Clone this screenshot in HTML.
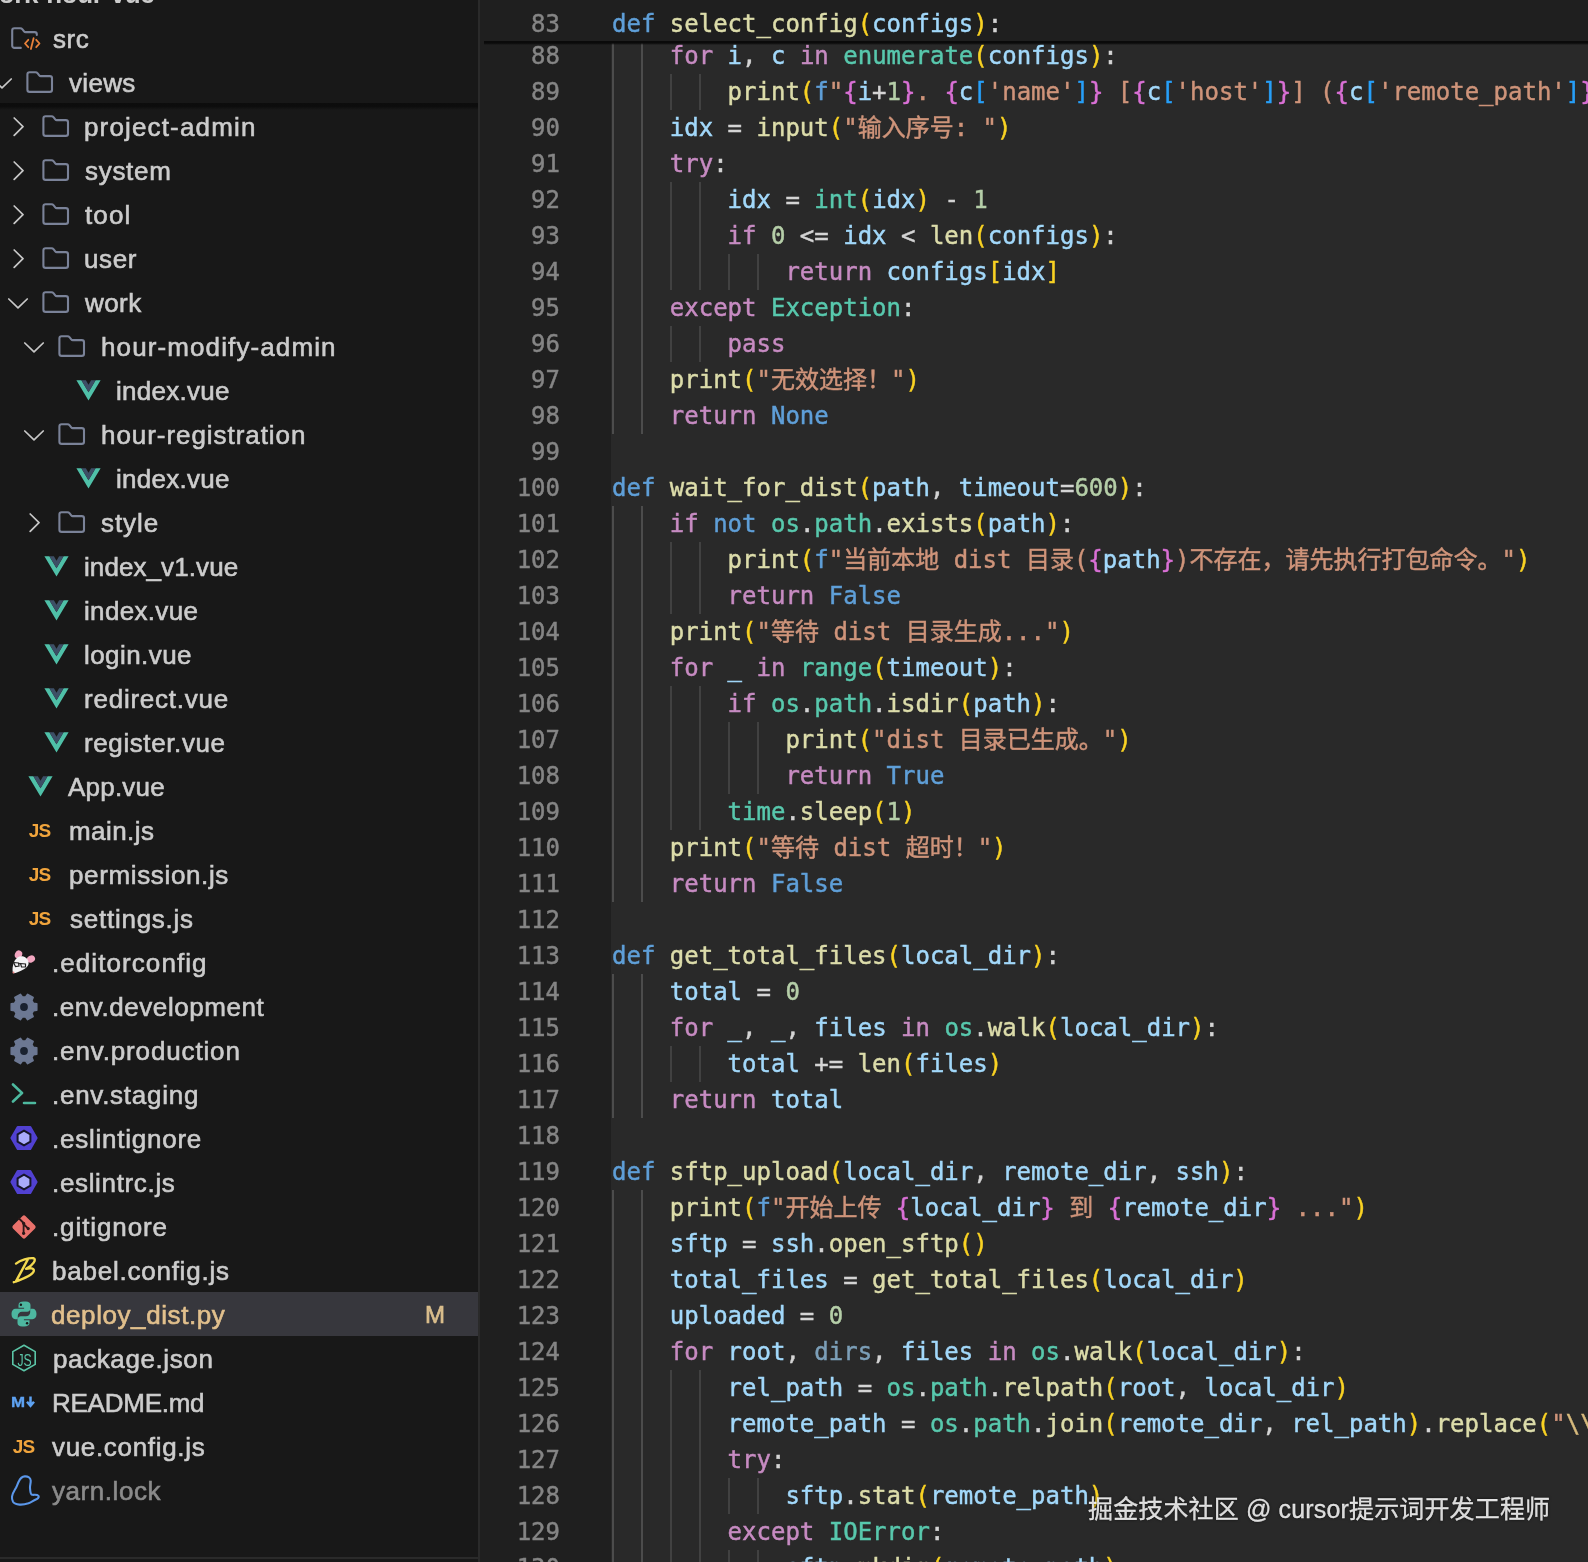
<!DOCTYPE html>
<html lang="zh"><head><meta charset="utf-8"><title>deploy_dist.py</title>
<style>
*{margin:0;padding:0;box-sizing:border-box}
html,body{width:1588px;height:1562px;overflow:hidden;background:#181818}
body{position:relative;font-family:"Liberation Sans","Noto Sans CJK SC",sans-serif}
#side{position:absolute;left:0;top:0;width:478px;height:1562px;background:#181818;overflow:hidden}
#sb{position:absolute;left:478px;top:0;width:2px;height:1562px;background:#2a2a2a}
.row{position:absolute;left:0;width:478px;height:44px;color:#cccccc;font-size:26px;line-height:44px;white-space:nowrap}
.row.sel{background:#37373d;color:#e2c08d}
.row.dim{color:#8b8b8b}
.lbl,.tx,.no,.badge,#wm,#hdr,.jsic,.mdic,.iw{will-change:transform}
.iw{position:absolute;display:block;line-height:0}
.ic{display:block;overflow:visible}
.lbl{position:absolute;top:1px;height:44px;line-height:44px;-webkit-text-stroke:0.6px}
.badge{position:absolute;left:425px;top:1px;font-size:24px;line-height:44px;color:#d9bd8c;-webkit-text-stroke:0.7px}
.jsic{display:block;font-weight:bold;color:#f0a43c;line-height:18px;letter-spacing:-0.9px;text-align:center;width:24px;height:18px;text-indent:-1px}
.mdic{display:block;font-weight:bold;color:#5ea2f2;font-size:15px;-webkit-text-stroke:0.3px;line-height:14px;width:26px;height:14px;white-space:nowrap;letter-spacing:0}
#hdr{position:absolute;left:-21px;top:-28.5px;font-size:26px;font-weight:bold;color:#cccccc;line-height:44px;white-space:nowrap;letter-spacing:-0.4px}
#sshadow{position:absolute;left:0;top:103px;width:478px;height:7px;background:linear-gradient(#0d0d0d,#0c0c0c 45%,#181818)}
#sbot{position:absolute;left:0;top:1557px;width:478px;height:2px;background:#2a2a2a}
#ed{position:absolute;left:480px;top:0;width:1108px;height:1562px;background:#1f1f1f;overflow:hidden}
#codebg{position:absolute;left:131px;top:41px;right:0;bottom:0;background:#292929}
.ln{position:absolute;left:0;width:1108px;height:36px;line-height:36px;font-family:"DejaVu Sans Mono","Liberation Mono","Noto Sans CJK SC",monospace;font-size:24px;white-space:pre;color:#d4d4d4;-webkit-text-stroke:0.45px}
.no{position:absolute;left:0;top:0;width:80px;text-align:right;color:#858585}
.tx{position:absolute;left:132px;top:0}
.g{position:absolute;top:0;width:2px;height:36px;background:#414141}
.g0{background:#4c4c4c}
.k{color:#5f9fd8}.c{color:#c78bc2}.f{color:#dcdcaa}.v{color:#a2d8fa}.t{color:#58c8ad}.s{color:#cf947a}.n{color:#b5cea8}
.b1{color:#f9d223}.b2{color:#da70d6}.b3{color:#279ff8}.d{color:#7c9fb8}.e{color:#d7ba7d}
#sticky{position:absolute;left:0;top:0;width:1108px;height:41px;background:#1f1f1f}
#sticky .ln{top:6px !important}
#stsh{position:absolute;left:4px;top:41px;width:1104px;height:4px;background:linear-gradient(#0a0a0a,#0a0a0a 50%,rgba(10,10,10,0))}
#wm{position:absolute;left:1088px;top:1490px;font-size:25px;letter-spacing:0.15px;-webkit-text-stroke:0.3px;line-height:38px;color:rgba(255,255,255,.84);white-space:nowrap;text-shadow:0 0 3px rgba(0,0,0,.7);font-family:"Liberation Sans","Noto Sans CJK SC",sans-serif}
</style></head>
<body>
<div id="side">
<div id="hdr">work-hour-vue</div>
<div class="row" style="top:104px"><span class="iw" style="left:42.0px;top:10.0px;width:28px;height:24px"><svg class="ic" width="28" height="24" viewBox="0 0 28 24" ><path d="M3.600 2.300h5.800c.9 0 1.700.4 2.300 1.100l1.500 1.900c.4.500 1 .8 1.600.8H23.800c1.300 0 2.200 1 2.200 2.200V19.700c0 1.300-1 2.200-2.200 2.200H3.600C2.400 21.900 1.400 20.900 1.400 19.700V4.500C1.400 3.300 2.400 2.300 3.600 2.300z" fill="none" stroke="#7a8298" stroke-width="2.100" stroke-linejoin="round"/></svg></span><span class="iw" style="left:12.5px;top:13px"><svg class="ic" width="12" height="20" viewBox="0 0 12 20" ><path d="M1.200 1l8.800 8.700-8.800 8.700" fill="none" stroke="#c8c8c8" stroke-width="1.700" stroke-linecap="round" stroke-linejoin="round"/></svg></span><span class="lbl" style="left:83.60px;letter-spacing:1.154px">project-admin</span></div>
<div class="row" style="top:148px"><span class="iw" style="left:42.0px;top:10.0px;width:28px;height:24px"><svg class="ic" width="28" height="24" viewBox="0 0 28 24" ><path d="M3.600 2.300h5.800c.9 0 1.700.4 2.300 1.100l1.500 1.900c.4.500 1 .8 1.600.8H23.800c1.300 0 2.200 1 2.200 2.200V19.700c0 1.300-1 2.200-2.200 2.200H3.600C2.400 21.900 1.400 20.900 1.400 19.700V4.500C1.400 3.300 2.400 2.300 3.600 2.300z" fill="none" stroke="#7a8298" stroke-width="2.100" stroke-linejoin="round"/></svg></span><span class="iw" style="left:12.5px;top:13px"><svg class="ic" width="12" height="20" viewBox="0 0 12 20" ><path d="M1.200 1l8.800 8.700-8.800 8.700" fill="none" stroke="#c8c8c8" stroke-width="1.700" stroke-linecap="round" stroke-linejoin="round"/></svg></span><span class="lbl" style="left:84.60px;letter-spacing:0.707px">system</span></div>
<div class="row" style="top:192px"><span class="iw" style="left:42.0px;top:10.0px;width:28px;height:24px"><svg class="ic" width="28" height="24" viewBox="0 0 28 24" ><path d="M3.600 2.300h5.800c.9 0 1.700.4 2.300 1.100l1.500 1.900c.4.500 1 .8 1.600.8H23.800c1.300 0 2.200 1 2.200 2.200V19.700c0 1.300-1 2.200-2.200 2.200H3.600C2.400 21.900 1.400 20.900 1.400 19.700V4.500C1.400 3.300 2.400 2.300 3.600 2.300z" fill="none" stroke="#7a8298" stroke-width="2.100" stroke-linejoin="round"/></svg></span><span class="iw" style="left:12.5px;top:13px"><svg class="ic" width="12" height="20" viewBox="0 0 12 20" ><path d="M1.200 1l8.800 8.700-8.800 8.700" fill="none" stroke="#c8c8c8" stroke-width="1.700" stroke-linecap="round" stroke-linejoin="round"/></svg></span><span class="lbl" style="left:84.60px;letter-spacing:1.133px">tool</span></div>
<div class="row" style="top:236px"><span class="iw" style="left:42.0px;top:10.0px;width:28px;height:24px"><svg class="ic" width="28" height="24" viewBox="0 0 28 24" ><path d="M3.600 2.300h5.800c.9 0 1.700.4 2.300 1.100l1.500 1.900c.4.500 1 .8 1.600.8H23.800c1.300 0 2.200 1 2.200 2.200V19.700c0 1.300-1 2.200-2.200 2.200H3.600C2.400 21.900 1.400 20.900 1.400 19.700V4.500C1.400 3.300 2.400 2.300 3.600 2.300z" fill="none" stroke="#7a8298" stroke-width="2.100" stroke-linejoin="round"/></svg></span><span class="iw" style="left:12.5px;top:13px"><svg class="ic" width="12" height="20" viewBox="0 0 12 20" ><path d="M1.200 1l8.800 8.700-8.800 8.700" fill="none" stroke="#c8c8c8" stroke-width="1.700" stroke-linecap="round" stroke-linejoin="round"/></svg></span><span class="lbl" style="left:83.60px;letter-spacing:0.588px">user</span></div>
<div class="row" style="top:280px"><span class="iw" style="left:42.0px;top:10.0px;width:28px;height:24px"><svg class="ic" width="28" height="24" viewBox="0 0 28 24" ><path d="M3.600 2.300h5.800c.9 0 1.700.4 2.300 1.100l1.500 1.900c.4.500 1 .8 1.600.8H23.800c1.300 0 2.200 1 2.200 2.200V19.700c0 1.300-1 2.200-2.200 2.200H3.600C2.400 21.900 1.400 20.900 1.400 19.700V4.500C1.400 3.300 2.400 2.300 3.600 2.300z" fill="none" stroke="#7a8298" stroke-width="2.100" stroke-linejoin="round"/></svg></span><span class="iw" style="left:7.0px;top:17.500px"><svg class="ic" width="22" height="12" viewBox="0 0 22 12" ><path d="M1.800 1l9.200 8.800L20.200 1" fill="none" stroke="#c8c8c8" stroke-width="1.700" stroke-linecap="round" stroke-linejoin="round"/></svg></span><span class="lbl" style="left:84.60px;letter-spacing:0.444px">work</span></div>
<div class="row" style="top:324px"><span class="iw" style="left:58.0px;top:10.0px;width:28px;height:24px"><svg class="ic" width="28" height="24" viewBox="0 0 28 24" ><path d="M3.600 2.300h5.800c.9 0 1.700.4 2.300 1.100l1.500 1.900c.4.500 1 .8 1.600.8H23.800c1.300 0 2.200 1 2.200 2.200V19.700c0 1.300-1 2.200-2.200 2.200H3.600C2.400 21.900 1.400 20.900 1.400 19.700V4.500C1.400 3.300 2.400 2.300 3.600 2.300z" fill="none" stroke="#7a8298" stroke-width="2.100" stroke-linejoin="round"/></svg></span><span class="iw" style="left:23.0px;top:17.500px"><svg class="ic" width="22" height="12" viewBox="0 0 22 12" ><path d="M1.800 1l9.200 8.800L20.200 1" fill="none" stroke="#c8c8c8" stroke-width="1.700" stroke-linecap="round" stroke-linejoin="round"/></svg></span><span class="lbl" style="left:100.80px;letter-spacing:1.114px">hour-modify-admin</span></div>
<div class="row" style="top:368px"><span class="iw" style="left:75.5px;top:11.5px;width:25px;height:21px"><svg class="ic" width="25" height="21" viewBox="0 0 25 21" ><path d="M0.400 0.300h5l7.100 12L19.600 0.300h5L12.500 20.500z" fill="#4fc0a8"/><path d="M5.400 0.300h4.500l2.600 4.400L15.100 0.300h4.500l-7.100 12z" fill="#3d4f66"/></svg></span><span class="lbl" style="left:116.20px;letter-spacing:0.278px">index.vue</span></div>
<div class="row" style="top:412px"><span class="iw" style="left:58.0px;top:10.0px;width:28px;height:24px"><svg class="ic" width="28" height="24" viewBox="0 0 28 24" ><path d="M3.600 2.300h5.800c.9 0 1.700.4 2.300 1.100l1.500 1.900c.4.500 1 .8 1.600.8H23.800c1.300 0 2.200 1 2.200 2.200V19.700c0 1.300-1 2.200-2.200 2.200H3.600C2.400 21.900 1.400 20.900 1.400 19.700V4.500C1.400 3.300 2.400 2.300 3.600 2.300z" fill="none" stroke="#7a8298" stroke-width="2.100" stroke-linejoin="round"/></svg></span><span class="iw" style="left:23.0px;top:17.500px"><svg class="ic" width="22" height="12" viewBox="0 0 22 12" ><path d="M1.800 1l9.200 8.800L20.200 1" fill="none" stroke="#c8c8c8" stroke-width="1.700" stroke-linecap="round" stroke-linejoin="round"/></svg></span><span class="lbl" style="left:100.80px;letter-spacing:0.944px">hour-registration</span></div>
<div class="row" style="top:456px"><span class="iw" style="left:75.5px;top:11.5px;width:25px;height:21px"><svg class="ic" width="25" height="21" viewBox="0 0 25 21" ><path d="M0.400 0.300h5l7.100 12L19.600 0.300h5L12.500 20.500z" fill="#4fc0a8"/><path d="M5.400 0.300h4.500l2.600 4.400L15.100 0.300h4.500l-7.100 12z" fill="#3d4f66"/></svg></span><span class="lbl" style="left:116.20px;letter-spacing:0.278px">index.vue</span></div>
<div class="row" style="top:500px"><span class="iw" style="left:58.0px;top:10.0px;width:28px;height:24px"><svg class="ic" width="28" height="24" viewBox="0 0 28 24" ><path d="M3.600 2.300h5.800c.9 0 1.700.4 2.300 1.100l1.500 1.900c.4.500 1 .8 1.600.8H23.800c1.300 0 2.200 1 2.200 2.200V19.700c0 1.300-1 2.200-2.200 2.200H3.600C2.400 21.900 1.400 20.900 1.400 19.700V4.500C1.400 3.300 2.400 2.300 3.600 2.300z" fill="none" stroke="#7a8298" stroke-width="2.100" stroke-linejoin="round"/></svg></span><span class="iw" style="left:28.5px;top:13px"><svg class="ic" width="12" height="20" viewBox="0 0 12 20" ><path d="M1.200 1l8.800 8.700-8.800 8.700" fill="none" stroke="#c8c8c8" stroke-width="1.700" stroke-linecap="round" stroke-linejoin="round"/></svg></span><span class="lbl" style="left:101.00px;letter-spacing:0.929px">style</span></div>
<div class="row" style="top:544px"><span class="iw" style="left:43.5px;top:11.5px;width:25px;height:21px"><svg class="ic" width="25" height="21" viewBox="0 0 25 21" ><path d="M0.400 0.300h5l7.100 12L19.600 0.300h5L12.500 20.500z" fill="#4fc0a8"/><path d="M5.400 0.300h4.500l2.600 4.400L15.100 0.300h4.500l-7.100 12z" fill="#3d4f66"/></svg></span><span class="lbl" style="left:83.80px;letter-spacing:0.084px">index_v1.vue</span></div>
<div class="row" style="top:588px"><span class="iw" style="left:43.5px;top:11.5px;width:25px;height:21px"><svg class="ic" width="25" height="21" viewBox="0 0 25 21" ><path d="M0.400 0.300h5l7.100 12L19.600 0.300h5L12.500 20.500z" fill="#4fc0a8"/><path d="M5.400 0.300h4.500l2.600 4.400L15.100 0.300h4.500l-7.100 12z" fill="#3d4f66"/></svg></span><span class="lbl" style="left:83.80px;letter-spacing:0.330px">index.vue</span></div>
<div class="row" style="top:632px"><span class="iw" style="left:43.5px;top:11.5px;width:25px;height:21px"><svg class="ic" width="25" height="21" viewBox="0 0 25 21" ><path d="M0.400 0.300h5l7.100 12L19.600 0.300h5L12.500 20.500z" fill="#4fc0a8"/><path d="M5.400 0.300h4.500l2.600 4.400L15.100 0.300h4.500l-7.100 12z" fill="#3d4f66"/></svg></span><span class="lbl" style="left:84.40px;letter-spacing:0.425px">login.vue</span></div>
<div class="row" style="top:676px"><span class="iw" style="left:43.5px;top:11.5px;width:25px;height:21px"><svg class="ic" width="25" height="21" viewBox="0 0 25 21" ><path d="M0.400 0.300h5l7.100 12L19.600 0.300h5L12.500 20.500z" fill="#4fc0a8"/><path d="M5.400 0.300h4.500l2.600 4.400L15.100 0.300h4.500l-7.100 12z" fill="#3d4f66"/></svg></span><span class="lbl" style="left:83.60px;letter-spacing:0.769px">redirect.vue</span></div>
<div class="row" style="top:720px"><span class="iw" style="left:43.5px;top:11.5px;width:25px;height:21px"><svg class="ic" width="25" height="21" viewBox="0 0 25 21" ><path d="M0.400 0.300h5l7.100 12L19.600 0.300h5L12.500 20.500z" fill="#4fc0a8"/><path d="M5.400 0.300h4.500l2.600 4.400L15.100 0.300h4.500l-7.100 12z" fill="#3d4f66"/></svg></span><span class="lbl" style="left:83.60px;letter-spacing:0.599px">register.vue</span></div>
<div class="row" style="top:764px"><span class="iw" style="left:27.5px;top:11.5px;width:25px;height:21px"><svg class="ic" width="25" height="21" viewBox="0 0 25 21" ><path d="M0.400 0.300h5l7.100 12L19.600 0.300h5L12.500 20.500z" fill="#4fc0a8"/><path d="M5.400 0.300h4.500l2.600 4.400L15.100 0.300h4.500l-7.100 12z" fill="#3d4f66"/></svg></span><span class="lbl" style="left:68.48px;letter-spacing:0.221px">App.vue</span></div>
<div class="row" style="top:808px"><span class="iw" style="left:28.0px;top:14.0px;width:24px;height:18px"><span class="jsic" style="font-size:19px">JS</span></span><span class="lbl" style="left:68.60px;letter-spacing:0.425px">main.js</span></div>
<div class="row" style="top:852px"><span class="iw" style="left:28.0px;top:14.0px;width:24px;height:18px"><span class="jsic" style="font-size:19px">JS</span></span><span class="lbl" style="left:68.60px;letter-spacing:0.636px">permission.js</span></div>
<div class="row" style="top:896px"><span class="iw" style="left:28.0px;top:14.0px;width:24px;height:18px"><span class="jsic" style="font-size:19px">JS</span></span><span class="lbl" style="left:69.60px;letter-spacing:0.752px">settings.js</span></div>
<div class="row" style="top:940px"><span class="iw" style="left:10.0px;top:9.0px;width:28px;height:26px"><svg class="ic" width="28" height="26" viewBox="0 0 28 26" ><ellipse cx="8.500" cy="5.500" rx="3.600" ry="4.200" fill="#f2a6c0" transform="rotate(25 8.500 5.500)"/><ellipse cx="21" cy="10" rx="4.200" ry="3.400" fill="#f2a6c0" transform="rotate(-30 21 10)"/><path d="M3 24c-1-3-.5-8 1.500-12 2-4 5.500-5.500 9-4.500 3.500 1 5.500 4.500 5 7.500-.5 3-4 5-8 7-3 1.500-6 2.500-7.500 2z" fill="#f4f4f6"/><path d="M3.500 13.500l5 .5.500 3-3.500.5zM10.500 14.500l5 .5 0 3-4 0z M9 14.500l1.500.5" fill="none" stroke="#222" stroke-width="1.200"/><circle cx="3.500" cy="23.500" r="1" fill="#e88"/></svg></span><span class="lbl" style="left:51.60px;letter-spacing:1.073px">.editorconfig</span></div>
<div class="row" style="top:984px"><span class="iw" style="left:10.0px;top:9.0px;width:28px;height:28px"><svg class="ic" width="28" height="28" viewBox="0 0 28 28" ><path d="M23.52 10.34 L26.81 10.81 L26.81 17.19 L23.52 17.66 L21.93 20.42 L23.17 23.50 L17.64 26.69 L15.60 24.07 L12.40 24.07 L10.36 26.69 L4.83 23.50 L6.07 20.42 L4.48 17.66 L1.19 17.19 L1.19 10.81 L4.48 10.34 L6.07 7.58 L4.83 4.50 L10.36 1.31 L12.40 3.93 L15.60 3.93 L17.64 1.31 L23.17 4.50 L21.93 7.58Z" fill="#6c7893" stroke="#6c7893" stroke-width="1.500" stroke-linejoin="round"/><circle cx="14" cy="14" r="3.900" fill="#1a2230"/></svg></span><span class="lbl" style="left:51.60px;letter-spacing:0.563px">.env.development</span></div>
<div class="row" style="top:1028px"><span class="iw" style="left:10.0px;top:9.0px;width:28px;height:28px"><svg class="ic" width="28" height="28" viewBox="0 0 28 28" ><path d="M23.52 10.34 L26.81 10.81 L26.81 17.19 L23.52 17.66 L21.93 20.42 L23.17 23.50 L17.64 26.69 L15.60 24.07 L12.40 24.07 L10.36 26.69 L4.83 23.50 L6.07 20.42 L4.48 17.66 L1.19 17.19 L1.19 10.81 L4.48 10.34 L6.07 7.58 L4.83 4.50 L10.36 1.31 L12.40 3.93 L15.60 3.93 L17.64 1.31 L23.17 4.50 L21.93 7.58Z" fill="#6c7893" stroke="#6c7893" stroke-width="1.500" stroke-linejoin="round"/><circle cx="14" cy="14" r="3.900" fill="#1a2230"/></svg></span><span class="lbl" style="left:51.60px;letter-spacing:0.860px">.env.production</span></div>
<div class="row" style="top:1072px"><span class="iw" style="left:10.5px;top:11.0px;width:26px;height:22px"><svg class="ic" width="26" height="22" viewBox="0 0 26 22" ><path d="M2 1.500l9 8.500-9 8.500M13 20h11" fill="none" stroke="#4db99f" stroke-width="2.600" stroke-linecap="round" stroke-linejoin="round"/></svg></span><span class="lbl" style="left:51.60px;letter-spacing:0.734px">.env.staging</span></div>
<div class="row" style="top:1116px"><span class="iw" style="left:10.0px;top:10.0px;width:28px;height:24px"><svg class="ic" width="28" height="24" viewBox="0 0 28 24" ><polygon points="26.60,12.00 20.30,22.91 7.70,22.91 1.40,12.00 7.70,1.09 20.30,1.09" fill="#5141d2" stroke="#5141d2" stroke-width="2" stroke-linejoin="round"/><polygon points="20.41,15.70 14.00,19.40 7.59,15.70 7.59,8.30 14.00,4.60 20.41,8.30" fill="#a9abfb" stroke="#16162a" stroke-width="2" stroke-linejoin="round"/></svg></span><span class="lbl" style="left:51.60px;letter-spacing:0.761px">.eslintignore</span></div>
<div class="row" style="top:1160px"><span class="iw" style="left:10.0px;top:10.0px;width:28px;height:24px"><svg class="ic" width="28" height="24" viewBox="0 0 28 24" ><polygon points="26.60,12.00 20.30,22.91 7.70,22.91 1.40,12.00 7.70,1.09 20.30,1.09" fill="#5141d2" stroke="#5141d2" stroke-width="2" stroke-linejoin="round"/><polygon points="20.41,15.70 14.00,19.40 7.59,15.70 7.59,8.30 14.00,4.60 20.41,8.30" fill="#a9abfb" stroke="#16162a" stroke-width="2" stroke-linejoin="round"/></svg></span><span class="lbl" style="left:51.60px;letter-spacing:0.662px">.eslintrc.js</span></div>
<div class="row" style="top:1204px"><span class="iw" style="left:11.0px;top:10.0px;width:26px;height:26px"><svg class="ic" width="26" height="26" viewBox="0 0 26 26" ><rect x="4.200" y="4.200" width="17.600" height="17.600" rx="2" transform="rotate(45 13 13)" fill="#e9716b"/><path d="M8 4.500L12.600 9L12.600 19.500M12.600 10l4.600 4.600" stroke="#2a1818" stroke-width="1.800" fill="none" stroke-linecap="round" stroke-linejoin="round"/><circle cx="12.600" cy="19.300" r="1.600" fill="#2a1818"/><circle cx="17.200" cy="14.600" r="1.600" fill="#2a1818"/><circle cx="12.600" cy="9.300" r="1.600" fill="#2a1818"/></svg></span><span class="lbl" style="left:51.60px;letter-spacing:0.897px">.gitignore</span></div>
<div class="row" style="top:1248px"><span class="iw" style="left:11.0px;top:6.5px;width:26px;height:30px"><svg class="ic" width="26" height="30" viewBox="0 0 26 30" ><path d="M5 8.600C9 5.500 18 2.500 22.500 3.200C26 4 22 10.500 15 13.800C19 12.800 23.500 13 22.800 16C22 20 12 24 2.800 27.200M16.700 4.600L4.800 26.600" fill="none" stroke="#f3d94f" stroke-width="2.400" stroke-linecap="round" stroke-linejoin="round"/></svg></span><span class="lbl" style="left:52.20px;letter-spacing:0.764px">babel.config.js</span></div>
<div class="row sel" style="top:1292px"><span class="iw" style="left:11.3px;top:9.0px;width:26px;height:26px"><svg class="ic" width="26" height="26" viewBox="0 0 26 26" ><path d="M12.800 0.500c-3.300 0-5.300 1.200-5.300 3.400v2.900h5.600v1H4.600C2.100 7.800.5 9.800.5 13c0 3.200 1.500 5.200 3.700 5.200h2.600v-3.400c0-2.300 1.900-4.100 4.200-4.100h5.100c1.900 0 3.400-1.500 3.400-3.400V3.900c0-2-1.900-3.400-4.600-3.400h-2.100z" fill="#4db7a0"/><path d="M13.200 25.500c3.300 0 5.300-1.200 5.300-3.400v-2.900h-5.600v-1h8.500c2.500 0 4.100-2 4.100-5.200 0-3.200-1.500-5.200-3.700-5.200h-2.600v3.400c0 2.300-1.900 4.100-4.200 4.100H9.900c-1.900 0-3.400 1.500-3.400 3.400v3.400c0 2 1.900 3.400 4.600 3.400h2.100z" fill="#4db7a0"/><circle cx="9.900" cy="3.700" r="1.200" fill="#181818"/><circle cx="16.100" cy="22.300" r="1.200" fill="#181818"/></svg></span><span class="lbl" style="left:51.40px;letter-spacing:0.582px">deploy_dist.py</span><span class="badge">M</span></div>
<div class="row" style="top:1336px"><span class="iw" style="left:11.0px;top:8.0px;width:26px;height:28px"><svg class="ic" width="26" height="28" viewBox="0 0 26 28" ><path d="M13 1.200L24.200 7.600V20.400L13 26.800 1.800 20.400V7.600z" fill="none" stroke="#5bc5a7" stroke-width="1.600" stroke-linejoin="round"/><text transform="translate(13.600 22.300) scale(0.74 1)" text-anchor="middle" font-family="Liberation Sans, sans-serif" font-size="16.500" fill="#5bc5a7">JS</text></svg></span><span class="lbl" style="left:52.80px;letter-spacing:0.604px">package.json</span></div>
<div class="row" style="top:1380px"><span class="iw" style="left:10.5px;top:15.0px;width:27px;height:14px"><span class="mdic"><span style="display:inline-block;transform:scaleX(1.13);transform-origin:0 50%">M</span><svg width="9" height="12" viewBox="0 0 9 12" style="margin-left:2.800px;vertical-align:-0.500px"><path d="M4.500 0.500v7.500M1 5.800l3.500 4 3.500-4" fill="none" stroke="#5ea2f2" stroke-width="2.500" stroke-linejoin="miter"/></svg></span></span><span class="lbl" style="left:51.76px;letter-spacing:-0.251px">README.md</span></div>
<div class="row" style="top:1424px"><span class="iw" style="left:12.0px;top:14.0px;width:24px;height:18px"><span class="jsic" style="font-size:19px">JS</span></span><span class="lbl" style="left:52.40px;letter-spacing:0.682px">vue.config.js</span></div>
<div class="row dim" style="top:1468px"><span class="iw" style="left:9.5px;top:6.5px;width:30px;height:30px"><svg class="ic" width="30" height="30" viewBox="0 0 30 30" ><path d="M14.800 1.400C18 1.200 20.500 3 20.700 5.500C20.900 8 19.800 10.500 20 12.800C20.200 15.500 20.300 18.500 21.500 19.500C23.500 20.500 26.500 18.800 28.500 20.900C29.500 22.300 27.500 23.800 25.800 24.500C23 25.800 21 27.300 18.500 28.300C15.500 29.300 12.500 29.800 9.600 29.600C6.500 29.400 4 28.500 3 26.800C2 25 1.800 23.500 2 21.700C2.500 18 4.500 15.500 6 12.800C7.200 10.500 7.800 8.300 8.900 6.200C10 3.800 12 1.600 14.800 1.400Z" fill="none" stroke="#5b97ea" stroke-width="2.100" stroke-linejoin="round" stroke-linecap="round"/></svg></span><span class="lbl" style="left:52.40px;letter-spacing:0.560px">yarn.lock</span></div>
<div class="row" style="top:16px"><span class="iw" style="left:9.0px;top:10.0px;width:32px;height:24px"><svg class="ic" width="32" height="24" viewBox="0 0 32 24" ><g transform="translate(1.800 0)"><path d="M10 21.900H3.600C2.400 21.900 1.400 20.900 1.400 19.700V4.500C1.400 3.300 2.400 2.300 3.600 2.300h5.800c.9 0 1.700.4 2.300 1.100l1.500 1.900c.4.500 1 .8 1.600.8H23.800c1.300 0 2.200 1 2.200 2.200V9" fill="none" stroke="#7a8298" stroke-width="2.100" stroke-linecap="round" stroke-linejoin="round"/></g><path d="M19.300 13.800l-3.300 3.700 3.300 3.700M27.200 13.800l3.300 3.700-3.300 3.700M24.600 12.200l-2.700 10.800" fill="none" stroke="#e8813a" stroke-width="1.800" stroke-linecap="round" stroke-linejoin="round"/></svg></span><span class="lbl" style="left:52.80px;letter-spacing:0.600px">src</span></div>
<div class="row" style="top:60px"><span class="iw" style="left:26.0px;top:10.0px;width:28px;height:24px"><svg class="ic" width="28" height="24" viewBox="0 0 28 24" ><path d="M3.600 2.300h5.800c.9 0 1.700.4 2.300 1.100l1.500 1.900c.4.500 1 .8 1.600.8H23.800c1.300 0 2.200 1 2.200 2.200V19.700c0 1.300-1 2.200-2.200 2.200H3.600C2.400 21.900 1.400 20.900 1.400 19.700V4.500C1.400 3.300 2.400 2.300 3.600 2.300z" fill="none" stroke="#7a8298" stroke-width="2.100" stroke-linejoin="round"/></svg></span><span class="iw" style="left:-9.0px;top:17.500px"><svg class="ic" width="22" height="12" viewBox="0 0 22 12" ><path d="M1.800 1l9.200 8.800L20.200 1" fill="none" stroke="#c8c8c8" stroke-width="1.700" stroke-linecap="round" stroke-linejoin="round"/></svg></span><span class="lbl" style="left:68.96px;letter-spacing:0.312px">views</span></div>
<div id="sshadow"></div>
<div id="sbot"></div>
</div>
<div id="sb"></div>
<div id="ed">
<div id="codebg"></div>
<div class="ln" style="top:38px"><span class="no">88</span><i class="g g0" style="left:132.00px"></i><i class="g g0" style="left:160.90px"></i><span class="tx">    <span class="c">for</span> <span class="v">i</span>, <span class="v">c</span> <span class="c">in</span> <span class="t">enumerate</span><span class="b1">(</span><span class="v">configs</span><span class="b1">)</span>:</span></div><div class="ln" style="top:74px"><span class="no">89</span><i class="g g0" style="left:132.00px"></i><i class="g g0" style="left:160.90px"></i><i class="g" style="left:189.80px"></i><i class="g" style="left:218.70px"></i><span class="tx">        <span class="f">print</span><span class="b1">(</span><span class="k">f</span><span class="s">"</span><span class="b2">{</span><span class="v">i</span>+<span class="n">1</span><span class="b2">}</span><span class="s">. </span><span class="b2">{</span><span class="v">c</span><span class="b3">[</span><span class="s">'name'</span><span class="b3">]</span><span class="b2">}</span><span class="s"> [</span><span class="b2">{</span><span class="v">c</span><span class="b3">[</span><span class="s">'host'</span><span class="b3">]</span><span class="b2">}</span><span class="s">] (</span><span class="b2">{</span><span class="v">c</span><span class="b3">[</span><span class="s">'remote_path'</span><span class="b3">]</span><span class="b2">}</span><span class="s">)"</span><span class="b1">)</span></span></div><div class="ln" style="top:110px"><span class="no">90</span><i class="g g0" style="left:132.00px"></i><i class="g g0" style="left:160.90px"></i><span class="tx">    <span class="v">idx</span> = <span class="f">input</span><span class="b1">(</span><span class="s">"输入序号: "</span><span class="b1">)</span></span></div><div class="ln" style="top:146px"><span class="no">91</span><i class="g g0" style="left:132.00px"></i><i class="g g0" style="left:160.90px"></i><span class="tx">    <span class="c">try</span>:</span></div><div class="ln" style="top:182px"><span class="no">92</span><i class="g g0" style="left:132.00px"></i><i class="g g0" style="left:160.90px"></i><i class="g" style="left:189.80px"></i><i class="g" style="left:218.70px"></i><span class="tx">        <span class="v">idx</span> = <span class="t">int</span><span class="b1">(</span><span class="v">idx</span><span class="b1">)</span> - <span class="n">1</span></span></div><div class="ln" style="top:218px"><span class="no">93</span><i class="g g0" style="left:132.00px"></i><i class="g g0" style="left:160.90px"></i><i class="g" style="left:189.80px"></i><i class="g" style="left:218.70px"></i><span class="tx">        <span class="c">if</span> <span class="n">0</span> &lt;= <span class="v">idx</span> &lt; <span class="f">len</span><span class="b1">(</span><span class="v">configs</span><span class="b1">)</span>:</span></div><div class="ln" style="top:254px"><span class="no">94</span><i class="g g0" style="left:132.00px"></i><i class="g g0" style="left:160.90px"></i><i class="g" style="left:189.80px"></i><i class="g" style="left:218.70px"></i><i class="g" style="left:247.60px"></i><i class="g" style="left:276.50px"></i><span class="tx">            <span class="c">return</span> <span class="v">configs</span><span class="b1">[</span><span class="v">idx</span><span class="b1">]</span></span></div><div class="ln" style="top:290px"><span class="no">95</span><i class="g g0" style="left:132.00px"></i><i class="g g0" style="left:160.90px"></i><span class="tx">    <span class="c">except</span> <span class="t">Exception</span>:</span></div><div class="ln" style="top:326px"><span class="no">96</span><i class="g g0" style="left:132.00px"></i><i class="g g0" style="left:160.90px"></i><i class="g" style="left:189.80px"></i><i class="g" style="left:218.70px"></i><span class="tx">        <span class="c">pass</span></span></div><div class="ln" style="top:362px"><span class="no">97</span><i class="g g0" style="left:132.00px"></i><i class="g g0" style="left:160.90px"></i><span class="tx">    <span class="f">print</span><span class="b1">(</span><span class="s">"无效选择！"</span><span class="b1">)</span></span></div><div class="ln" style="top:398px"><span class="no">98</span><i class="g g0" style="left:132.00px"></i><i class="g g0" style="left:160.90px"></i><span class="tx">    <span class="c">return</span> <span class="k">None</span></span></div><div class="ln" style="top:434px"><span class="no">99</span><span class="tx"></span></div><div class="ln" style="top:470px"><span class="no">100</span><span class="tx"><span class="k">def</span> <span class="f">wait_for_dist</span><span class="b1">(</span><span class="v">path</span>, <span class="v">timeout</span>=<span class="n">600</span><span class="b1">)</span>:</span></div><div class="ln" style="top:506px"><span class="no">101</span><i class="g g0" style="left:132.00px"></i><i class="g g0" style="left:160.90px"></i><span class="tx">    <span class="c">if</span> <span class="k">not</span> <span class="t">os</span>.<span class="t">path</span>.<span class="f">exists</span><span class="b1">(</span><span class="v">path</span><span class="b1">)</span>:</span></div><div class="ln" style="top:542px"><span class="no">102</span><i class="g g0" style="left:132.00px"></i><i class="g g0" style="left:160.90px"></i><i class="g" style="left:189.80px"></i><i class="g" style="left:218.70px"></i><span class="tx">        <span class="f">print</span><span class="b1">(</span><span class="k">f</span><span class="s">"当前本地 dist 目录(</span><span class="b2">{</span><span class="v">path</span><span class="b2">}</span><span class="s">)不存在，请先执行打包命令。"</span><span class="b1">)</span></span></div><div class="ln" style="top:578px"><span class="no">103</span><i class="g g0" style="left:132.00px"></i><i class="g g0" style="left:160.90px"></i><i class="g" style="left:189.80px"></i><i class="g" style="left:218.70px"></i><span class="tx">        <span class="c">return</span> <span class="k">False</span></span></div><div class="ln" style="top:614px"><span class="no">104</span><i class="g g0" style="left:132.00px"></i><i class="g g0" style="left:160.90px"></i><span class="tx">    <span class="f">print</span><span class="b1">(</span><span class="s">"等待 dist 目录生成..."</span><span class="b1">)</span></span></div><div class="ln" style="top:650px"><span class="no">105</span><i class="g g0" style="left:132.00px"></i><i class="g g0" style="left:160.90px"></i><span class="tx">    <span class="c">for</span> <span class="v">_</span> <span class="c">in</span> <span class="t">range</span><span class="b1">(</span><span class="v">timeout</span><span class="b1">)</span>:</span></div><div class="ln" style="top:686px"><span class="no">106</span><i class="g g0" style="left:132.00px"></i><i class="g g0" style="left:160.90px"></i><i class="g" style="left:189.80px"></i><i class="g" style="left:218.70px"></i><span class="tx">        <span class="c">if</span> <span class="t">os</span>.<span class="t">path</span>.<span class="f">isdir</span><span class="b1">(</span><span class="v">path</span><span class="b1">)</span>:</span></div><div class="ln" style="top:722px"><span class="no">107</span><i class="g g0" style="left:132.00px"></i><i class="g g0" style="left:160.90px"></i><i class="g" style="left:189.80px"></i><i class="g" style="left:218.70px"></i><i class="g" style="left:247.60px"></i><i class="g" style="left:276.50px"></i><span class="tx">            <span class="f">print</span><span class="b1">(</span><span class="s">"dist 目录已生成。"</span><span class="b1">)</span></span></div><div class="ln" style="top:758px"><span class="no">108</span><i class="g g0" style="left:132.00px"></i><i class="g g0" style="left:160.90px"></i><i class="g" style="left:189.80px"></i><i class="g" style="left:218.70px"></i><i class="g" style="left:247.60px"></i><i class="g" style="left:276.50px"></i><span class="tx">            <span class="c">return</span> <span class="k">True</span></span></div><div class="ln" style="top:794px"><span class="no">109</span><i class="g g0" style="left:132.00px"></i><i class="g g0" style="left:160.90px"></i><i class="g" style="left:189.80px"></i><i class="g" style="left:218.70px"></i><span class="tx">        <span class="t">time</span>.<span class="f">sleep</span><span class="b1">(</span><span class="n">1</span><span class="b1">)</span></span></div><div class="ln" style="top:830px"><span class="no">110</span><i class="g g0" style="left:132.00px"></i><i class="g g0" style="left:160.90px"></i><span class="tx">    <span class="f">print</span><span class="b1">(</span><span class="s">"等待 dist 超时！"</span><span class="b1">)</span></span></div><div class="ln" style="top:866px"><span class="no">111</span><i class="g g0" style="left:132.00px"></i><i class="g g0" style="left:160.90px"></i><span class="tx">    <span class="c">return</span> <span class="k">False</span></span></div><div class="ln" style="top:902px"><span class="no">112</span><span class="tx"></span></div><div class="ln" style="top:938px"><span class="no">113</span><span class="tx"><span class="k">def</span> <span class="f">get_total_files</span><span class="b1">(</span><span class="v">local_dir</span><span class="b1">)</span>:</span></div><div class="ln" style="top:974px"><span class="no">114</span><i class="g g0" style="left:132.00px"></i><i class="g g0" style="left:160.90px"></i><span class="tx">    <span class="v">total</span> = <span class="n">0</span></span></div><div class="ln" style="top:1010px"><span class="no">115</span><i class="g g0" style="left:132.00px"></i><i class="g g0" style="left:160.90px"></i><span class="tx">    <span class="c">for</span> <span class="v">_</span>, <span class="v">_</span>, <span class="v">files</span> <span class="c">in</span> <span class="t">os</span>.<span class="f">walk</span><span class="b1">(</span><span class="v">local_dir</span><span class="b1">)</span>:</span></div><div class="ln" style="top:1046px"><span class="no">116</span><i class="g g0" style="left:132.00px"></i><i class="g g0" style="left:160.90px"></i><i class="g" style="left:189.80px"></i><i class="g" style="left:218.70px"></i><span class="tx">        <span class="v">total</span> += <span class="f">len</span><span class="b1">(</span><span class="v">files</span><span class="b1">)</span></span></div><div class="ln" style="top:1082px"><span class="no">117</span><i class="g g0" style="left:132.00px"></i><i class="g g0" style="left:160.90px"></i><span class="tx">    <span class="c">return</span> <span class="v">total</span></span></div><div class="ln" style="top:1118px"><span class="no">118</span><span class="tx"></span></div><div class="ln" style="top:1154px"><span class="no">119</span><span class="tx"><span class="k">def</span> <span class="f">sftp_upload</span><span class="b1">(</span><span class="v">local_dir</span>, <span class="v">remote_dir</span>, <span class="v">ssh</span><span class="b1">)</span>:</span></div><div class="ln" style="top:1190px"><span class="no">120</span><i class="g g0" style="left:132.00px"></i><i class="g g0" style="left:160.90px"></i><span class="tx">    <span class="f">print</span><span class="b1">(</span><span class="k">f</span><span class="s">"开始上传 </span><span class="b2">{</span><span class="v">local_dir</span><span class="b2">}</span><span class="s"> 到 </span><span class="b2">{</span><span class="v">remote_dir</span><span class="b2">}</span><span class="s"> ..."</span><span class="b1">)</span></span></div><div class="ln" style="top:1226px"><span class="no">121</span><i class="g g0" style="left:132.00px"></i><i class="g g0" style="left:160.90px"></i><span class="tx">    <span class="v">sftp</span> = <span class="v">ssh</span>.<span class="f">open_sftp</span><span class="b1">()</span></span></div><div class="ln" style="top:1262px"><span class="no">122</span><i class="g g0" style="left:132.00px"></i><i class="g g0" style="left:160.90px"></i><span class="tx">    <span class="v">total_files</span> = <span class="f">get_total_files</span><span class="b1">(</span><span class="v">local_dir</span><span class="b1">)</span></span></div><div class="ln" style="top:1298px"><span class="no">123</span><i class="g g0" style="left:132.00px"></i><i class="g g0" style="left:160.90px"></i><span class="tx">    <span class="v">uploaded</span> = <span class="n">0</span></span></div><div class="ln" style="top:1334px"><span class="no">124</span><i class="g g0" style="left:132.00px"></i><i class="g g0" style="left:160.90px"></i><span class="tx">    <span class="c">for</span> <span class="v">root</span>, <span class="d">dirs</span>, <span class="v">files</span> <span class="c">in</span> <span class="t">os</span>.<span class="f">walk</span><span class="b1">(</span><span class="v">local_dir</span><span class="b1">)</span>:</span></div><div class="ln" style="top:1370px"><span class="no">125</span><i class="g g0" style="left:132.00px"></i><i class="g g0" style="left:160.90px"></i><i class="g" style="left:189.80px"></i><i class="g" style="left:218.70px"></i><span class="tx">        <span class="v">rel_path</span> = <span class="t">os</span>.<span class="t">path</span>.<span class="f">relpath</span><span class="b1">(</span><span class="v">root</span>, <span class="v">local_dir</span><span class="b1">)</span></span></div><div class="ln" style="top:1406px"><span class="no">126</span><i class="g g0" style="left:132.00px"></i><i class="g g0" style="left:160.90px"></i><i class="g" style="left:189.80px"></i><i class="g" style="left:218.70px"></i><span class="tx">        <span class="v">remote_path</span> = <span class="t">os</span>.<span class="t">path</span>.<span class="f">join</span><span class="b1">(</span><span class="v">remote_dir</span>, <span class="v">rel_path</span><span class="b1">)</span>.<span class="f">replace</span><span class="b1">(</span><span class="s">"</span><span class="e">\\</span><span class="s">", "/"</span><span class="b1">)</span></span></div><div class="ln" style="top:1442px"><span class="no">127</span><i class="g g0" style="left:132.00px"></i><i class="g g0" style="left:160.90px"></i><i class="g" style="left:189.80px"></i><i class="g" style="left:218.70px"></i><span class="tx">        <span class="c">try</span>:</span></div><div class="ln" style="top:1478px"><span class="no">128</span><i class="g g0" style="left:132.00px"></i><i class="g g0" style="left:160.90px"></i><i class="g" style="left:189.80px"></i><i class="g" style="left:218.70px"></i><i class="g" style="left:247.60px"></i><i class="g" style="left:276.50px"></i><span class="tx">            <span class="v">sftp</span>.<span class="f">stat</span><span class="b1">(</span><span class="v">remote_path</span><span class="b1">)</span></span></div><div class="ln" style="top:1514px"><span class="no">129</span><i class="g g0" style="left:132.00px"></i><i class="g g0" style="left:160.90px"></i><i class="g" style="left:189.80px"></i><i class="g" style="left:218.70px"></i><span class="tx">        <span class="c">except</span> <span class="t">IOError</span>:</span></div><div class="ln" style="top:1550px"><span class="no">130</span><i class="g g0" style="left:132.00px"></i><i class="g g0" style="left:160.90px"></i><i class="g" style="left:189.80px"></i><i class="g" style="left:218.70px"></i><i class="g" style="left:247.60px"></i><i class="g" style="left:276.50px"></i><span class="tx">            <span class="v">sftp</span>.<span class="f">mkdir</span><span class="b1">(</span><span class="v">remote_path</span><span class="b1">)</span></span></div>
<div id="sticky"><div class="ln" style="top:0px"><span class="no">83</span><span class="tx"><span class="k">def</span> <span class="f">select_config</span><span class="b1">(</span><span class="v">configs</span><span class="b1">)</span>:</span></div></div>
<div id="stsh"></div>
</div>
<div id="wm">掘金技术社区 @ cursor提示词开发工程师</div>
</body></html>
